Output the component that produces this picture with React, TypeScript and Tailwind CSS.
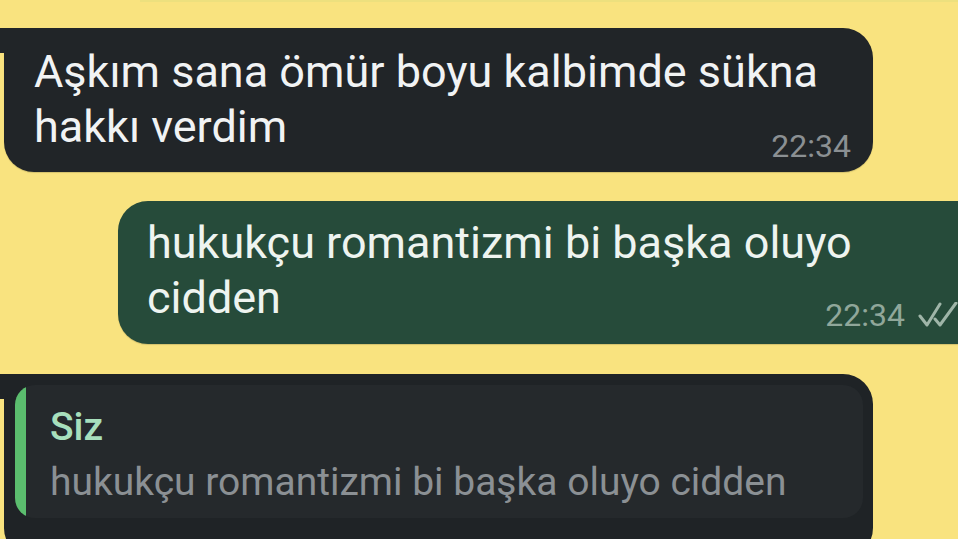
import React from 'react';

const Ticks = () => (
  <svg width="42" height="26" viewBox="0 0 42 26" fill="none" className="shrink-0">
    <path d="M2 14 L9 23 L22 2" stroke="#9fb5a8" strokeWidth="3" strokeLinecap="round" strokeLinejoin="round" />
    <path d="M17 17 L22 23 L38 1" stroke="#9fb5a8" strokeWidth="3" strokeLinecap="round" strokeLinejoin="round" />
  </svg>
);

const Time = ({ children, className }: { children: React.ReactNode; className: string }) => (
  <span className={`text-[32px] leading-[32px] ${className}`}>{children}</span>
);

export default function App() {
  return (
    <div
      className="relative w-[958px] h-[539px] overflow-hidden bg-[#f9e37f] flex flex-col"
      style={{ fontFamily: 'Roboto, "Noto Sans", sans-serif' }}
    >
      {/* edge of the previous bubble */}
      <div className="shrink-0 ml-[140px] h-[2px] bg-[#ede07e]" />

      {/* incoming */}
      <div className="shrink-0 relative mt-[26px] ml-[4px] w-[869px] bg-[#212528] rounded-[30px] rounded-tl-none pl-[30px] pr-[22px] pt-[16px] pb-[10px] shadow-[0_1px_1px_rgba(0,0,0,0.15)]">
        <div className="absolute -left-[6px] top-0 w-[10px] h-[25px] bg-[#212528] rounded-br-[4px]" />
        <p className="text-[45px] leading-[55px] text-[#f1f3f4]">Aşkım sana ömür boyu kalbimde sükna hakkı verdim</p>
        <div className="-mt-[24px] flex justify-end">
          <Time className="text-[#8b9093]">22:34</Time>
        </div>
      </div>

      {/* outgoing */}
      <div className="shrink-0 mt-[29px] ml-[118px] w-[860px] bg-[#264b3a] rounded-l-[30px] pl-[29px] pr-[18px] pt-[14px] pb-[13px] shadow-[0_1px_1px_rgba(0,0,0,0.15)]">
        <p className="text-[45px] leading-[55px] text-[#eef4f0]">hukukçu romantizmi bi başka oluyo cidden</p>
        <div className="-mt-[26px] flex justify-end items-center gap-[13px]">
          <Time className="text-[#90a79a]">22:34</Time>
          <Ticks />
        </div>
      </div>

      {/* incoming reply */}
      <div className="shrink-0 relative mt-[30px] ml-[4px] w-[869px] bg-[#1f2326] rounded-[30px] rounded-tl-none pl-[11px] pr-[10px] pt-[11px] pb-[40px]">
        <div className="absolute -left-[6px] top-0 w-[10px] h-[25px] bg-[#1f2326] rounded-br-[4px]" />
        <div className="flex rounded-[20px] overflow-hidden bg-[#25292c]">
          <div className="w-[11px] shrink-0 bg-[#5bbd6e]" />
          <div className="pl-[24px] pt-[15px] pb-[8px] text-[39px] leading-[55px]">
            <div className="font-medium text-[#a7dfbc]">Siz</div>
            <div className="text-[#8b9094]">hukukçu romantizmi bi başka oluyo cidden</div>
          </div>
        </div>
      </div>
    </div>
  );
}
